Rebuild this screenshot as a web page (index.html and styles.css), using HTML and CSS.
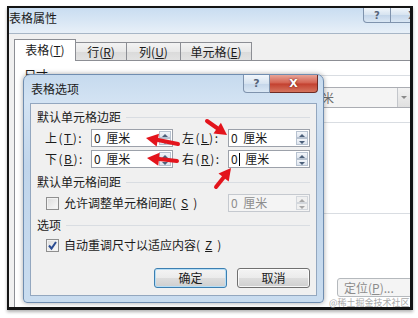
FILE: index.html
```html
<!DOCTYPE html>
<html lang="zh-CN">
<head>
    <meta charset="UTF-8">
    <title>表格属性</title>
    <link rel="stylesheet" href="styles.css">
</head>
<body>
<div class="screen">
    <div class="frame">
        <div class="titlebar">
            <span class="title">表格属性</span>
            <div class="caption">
                <span class="cap-btn help">?</span>
                <span class="cap-btn close">X</span>
            </div>
        </div>
        <div class="tabs">
            <div class="tab active">表格(<u>T</u>)</div>
            <div class="tab tab-row">行(<u>R</u>)</div>
            <div class="tab tab-col">列(<u>U</u>)</div>
            <div class="tab tab-cell">单元格(<u>E</u>)</div>
        </div>
        <div class="panel">
            <div class="group-head"><span>尺寸</span></div>
            <div class="combo"><span class="combo-text">厘米</span><span class="combo-drop"></span></div>
            <div class="group-head head-align"></div>
            <div class="group-head head-wrap"></div>
            <div class="panel-btns"><span class="btn disabled">定位(<u>P</u>)...</span></div>
        </div>
    </div>

    <!-- 表格选项对话框 -->
    <div class="dialog">
        <div class="dlg-titlebar">
            <span class="dlg-title">表格选项</span>
            <div class="caption dlg-caption">
                <span class="cap-btn help">?</span>
                <span class="cap-btn close red">X</span>
            </div>
        </div>
        <div class="client">
            <div class="group-head"><span>默认单元格边距</span></div>
            <div class="margins">
                <label>上(<u>T</u>):</label>
                <div class="spin"><span class="val">0 厘米</span><span class="spin-btns"><i class="up"></i><i class="down"></i></span></div>
                <label class="second">左(<u>L</u>):</label>
                <div class="spin"><span class="val">0 厘米</span><span class="spin-btns"><i class="up"></i><i class="down"></i></span></div>
                <label>下(<u>B</u>):</label>
                <div class="spin"><span class="val">0 厘米</span><span class="spin-btns"><i class="up"></i><i class="down"></i></span></div>
                <label class="second">右(<u>R</u>):</label>
                <div class="spin"><span class="val">0<span class="caret"></span> 厘米</span><span class="spin-btns"><i class="up"></i><i class="down"></i></span></div>
            </div>

            <div class="group-head head-gap"><span>默认单元格间距</span></div>
            <div class="opt-row">
                <span class="check-label"><span class="check"></span>允许调整单元格间距(<u>S</u>)</span>
                <div class="spin disabled"><span class="val">0 厘米</span><span class="spin-btns"><i class="up"></i><i class="down"></i></span></div>
            </div>

            <div class="group-head head-opt"><span>选项</span></div>
            <div class="opt-row opt-last">
                <span class="check-label"><span class="check checked"><svg width="11" height="11" viewBox="0 0 11 11"><path d="M2 5.5 L4.5 8.5 L9 2" fill="none" stroke="#2b4c92" stroke-width="2"/></svg></span>自动重调尺寸以适应内容(<u>Z</u>)</span>
            </div>

            <div class="dlg-buttons">
                <span class="btn default">确定</span>
                <span class="btn">取消</span>
            </div>
        </div>
    </div>

    <svg class="arrows" width="418" height="318" viewBox="0 0 418 318">
        <g stroke="#e3141c" stroke-width="4" stroke-linecap="round">
            <line x1="178" y1="144" x2="158" y2="140"/>
            <line x1="177" y1="161" x2="159" y2="159"/>
            <line x1="207" y1="121" x2="217" y2="128"/>
            <line x1="216" y1="187" x2="224" y2="177"/>
        </g>
        <g fill="#e3141c">
            <polygon points="146,138 159,133.8 156.6,146.6"/>
            <polygon points="147,158 159.6,152.7 158.3,165.7"/>
            <polygon points="227,135 213.5,133.4 220.9,122.8"/>
            <polygon points="231,168 228.7,181.4 218.5,173.4"/>
        </g>
    </svg>

    <div class="watermark">@稀土掘金技术社区</div>
</div>
</body>
</html>
```

FILE: styles.css
```css
* {
    box-sizing: border-box;
}
body {
    margin: 0;
    background: #fff;
    font-family: "Noto Sans CJK SC", "Noto Sans", sans-serif;
    font-size: 12px;
    color: #1b1b1b;
}
u {
    text-underline-offset: 1px;
}
.screen {
    position: relative;
    width: 418px;
    height: 318px;
    overflow: hidden;
}

/* 外层窗口 */
.frame {
    margin: 6px 0 0 7px;
    width: 406px;
    height: 304px;
    border: solid #141414;
    border-width: 2px 3px 3px 2px;
    background: #f0f0f0;
    display: flex;
    flex-direction: column;
    overflow: hidden;
    box-shadow: 0 2px 3px rgba(0,0,0,0.3);
}
.titlebar {
    flex: 0 0 26px;
    display: flex;
    justify-content: space-between;
    align-items: flex-start;
    background: linear-gradient(180deg, #c9ddf1 0%, #d6e5f4 45%, #e8f0f8 100%);
    border-bottom: 1px solid #a7b6c6;
}
.title {
    padding-top: 2px;
    line-height: 16px;
}
.caption {
    display: flex;
    margin-right: -24px;
}
.cap-btn {
    height: 15px;
    display: flex;
    align-items: center;
    justify-content: center;
    border: 1px solid #7f93ad;
    border-top: none;
    font-family: "DejaVu Sans", sans-serif;
    font-size: 10px;
    font-weight: bold;
    color: #56647a;
    background: linear-gradient(180deg, #f1f6fb 0%, #d6e3f0 50%, #c3d5e9 51%, #dae7f4 100%);
}
.help {
    width: 28px;
    border-radius: 0 0 0 4px;
}
.close {
    width: 43px;
    border-left: none;
}

.tabs {
    flex: 0 0 26px;
    display: flex;
    align-items: flex-end;
    padding-left: 5px;
    position: relative;
    z-index: 1;
}
.tab {
    height: 18px;
    line-height: 17px;
    text-align: center;
    border: 1px solid #8c8e94;
    border-left: none;
    border-bottom: none;
    background: linear-gradient(180deg, #f3f3f3 0%, #e8e8e8 50%, #dadada 51%, #e2e2e2 100%);
}
.tab.active {
    width: 62px;
    height: 22px;
    line-height: 20px;
    margin-bottom: -1px;
    border-left: 1px solid #8c8e94;
    background: #fff;
}
.tab-row { width: 51px; }
.tab-col { width: 54px; }
.tab-cell { width: 71px; }

.panel {
    flex: 1;
    margin-left: 5px;
    background: #fff;
    border: 1px solid #8c8e94;
    border-right: none;
    border-bottom: none;
    padding: 7px 0 0 9px;
}
.group-head {
    display: flex;
    align-items: center;
    line-height: 14px;
    min-height: 14px;
}
.group-head::after {
    content: '';
    flex: 1;
    height: 1px;
    margin-left: 5px;
    background: #d9dde2;
}
.combo {
    display: flex;
    width: 112px;
    height: 21px;
    margin: 5px 0 0 276px;
    border: 1px solid #abadb3;
    background: #f4f4f4;
}
.combo-text {
    flex: 1;
    padding-left: 9px;
    line-height: 19px;
    color: #6d6d6d;
}
.combo-drop {
    width: 14px;
    border-left: 1px solid #c3c6cb;
    background: linear-gradient(180deg, #f2f2f2, #e0e0e0);
    position: relative;
}
.combo-drop::after {
    content: '';
    position: absolute;
    left: 3px;
    top: 8px;
    border-left: 3px solid transparent;
    border-right: 3px solid transparent;
    border-top: 3px solid #8a8a8a;
}
.head-align { margin-top: 7px; }
.head-wrap { margin-top: 77px; }
.panel-btns {
    margin: 58px 0 0 313px;
}
.panel-btns .btn {
    width: 80px;
    height: 19px;
    line-height: 17px;
    text-align: left;
    padding-left: 6px;
}

/* 按钮 */
.btn {
    display: inline-block;
    width: 73px;
    height: 20px;
    line-height: 18px;
    text-align: center;
    border: 1px solid #707070;
    border-radius: 3px;
    background: linear-gradient(180deg, #f4f4f4 0%, #ebebeb 50%, #dddddd 51%, #cfcfcf 100%);
    box-shadow: inset 0 0 0 1px rgba(255,255,255,0.8);
}
.btn.default {
    border-color: #3c7fb1;
    box-shadow: inset 0 0 0 1px #b6def6;
}
.btn.disabled {
    border-color: #b5b9bd;
    background: #f4f4f4;
    color: #8c8c8c;
    box-shadow: none;
}

/* 表格选项对话框 */
.dialog {
    position: absolute;
    left: 23px;
    top: 74px;
    width: 301px;
    height: 229px;
    border: 1px solid #6f8db0;
    border-radius: 7px 7px 4px 4px;
    padding: 0 6px 6px 6px;
    display: flex;
    flex-direction: column;
    background: linear-gradient(180deg, #c6daee 0%, #d3e3f3 12%, #c0d5eb 40%, #c9dcef 100%);
    box-shadow: 0 0 5px rgba(0,0,0,0.35);
}
.dlg-titlebar {
    flex: 0 0 28px;
    display: flex;
    justify-content: space-between;
    align-items: flex-start;
}
.dlg-title {
    padding: 6px 0 0 1px;
    line-height: 16px;
}
.dlg-caption {
    margin-right: -1px;
}
.dlg-caption .cap-btn {
    height: 18px;
    font-size: 11px;
}
.dlg-caption .help {
    width: 27px;
}
.dlg-caption .close {
    width: 48px;
    border-radius: 0 0 4px 0;
}
.close.red {
    border-color: #6f2b24;
    color: #fff;
    text-shadow: 0 0 2px #5a1610;
    background: linear-gradient(180deg, #e8a497 0%, #d3604f 48%, #c3402f 52%, #d5745e 100%);
}
.client {
    flex: 1;
    display: flex;
    flex-direction: column;
    background: #f0f0f0;
    border: 1px solid #93a7bf;
    padding: 6px 6px 0 6px;
}
.margins {
    display: grid;
    grid-template-columns: 46px 82px 55px 82px;
    grid-auto-rows: 18px;
    row-gap: 3px;
    margin: 5px 0 0 8px;
}
.margins label {
    line-height: 18px;
    letter-spacing: 1.5px;
}
.margins label.second {
    padding-left: 9px;
}
.spin {
    display: flex;
    height: 18px;
    border: 1px solid #9ca1aa;
    background: #fff;
}
.val {
    flex: 1;
    padding-left: 2px;
    line-height: 16px;
    word-spacing: 3px;
}
.caret {
    display: inline-block;
    width: 1px;
    height: 13px;
    margin-left: 1px;
    vertical-align: -2px;
    background: #000;
}
.spin-btns {
    width: 13px;
    display: flex;
    flex-direction: column;
    padding: 1px 1px 1px 0;
}
.spin-btns i {
    flex: 1;
    position: relative;
    border: 1px solid #b7c2d0;
    background: linear-gradient(180deg, #f3f6fa, #dde4ee);
}
.spin-btns i::after {
    content: '';
    position: absolute;
    left: 2px;
    top: 2px;
    border-left: 3px solid transparent;
    border-right: 3px solid transparent;
}
.spin-btns .up::after {
    border-bottom: 3px solid #4c607a;
}
.spin-btns .down::after {
    border-top: 3px solid #4c607a;
}
.spin.disabled {
    border-color: #c5c9cf;
    background: #f4f4f4;
    color: #8d8d8d;
}
.spin.disabled .spin-btns i {
    border-color: #d3d7dc;
    background: #f0f0f0;
}
.spin.disabled .up::after { border-bottom-color: #a6a6a6; }
.spin.disabled .down::after { border-top-color: #a6a6a6; }

.head-gap { margin-top: 7px; }
.head-opt { margin-top: 6px; }
.opt-row {
    display: grid;
    grid-template-columns: 1fr 82px;
    align-items: center;
    height: 18px;
    margin: 5px 0 0 9px;
}
.opt-row.opt-last {
    height: 16px;
}
.check-label {
    display: flex;
    align-items: center;
    gap: 5px;
    line-height: 16px;
}
.check {
    width: 13px;
    height: 13px;
    display: flex;
    align-items: center;
    justify-content: center;
    border: 1px solid #8f8f8f;
    background: linear-gradient(135deg, #dcdcdc, #fafafa);
    box-shadow: inset 0 0 0 1px #f2f2f2;
}
.dlg-buttons {
    display: flex;
    justify-content: flex-end;
    gap: 10px;
    margin-top: 15px;
}

.arrows {
    position: absolute;
    left: 0;
    top: 0;
    pointer-events: none;
}
.watermark {
    position: absolute;
    left: 329px;
    top: 297px;
    font-size: 9px;
    line-height: 12px;
    color: #a9a9a9;
}
```
